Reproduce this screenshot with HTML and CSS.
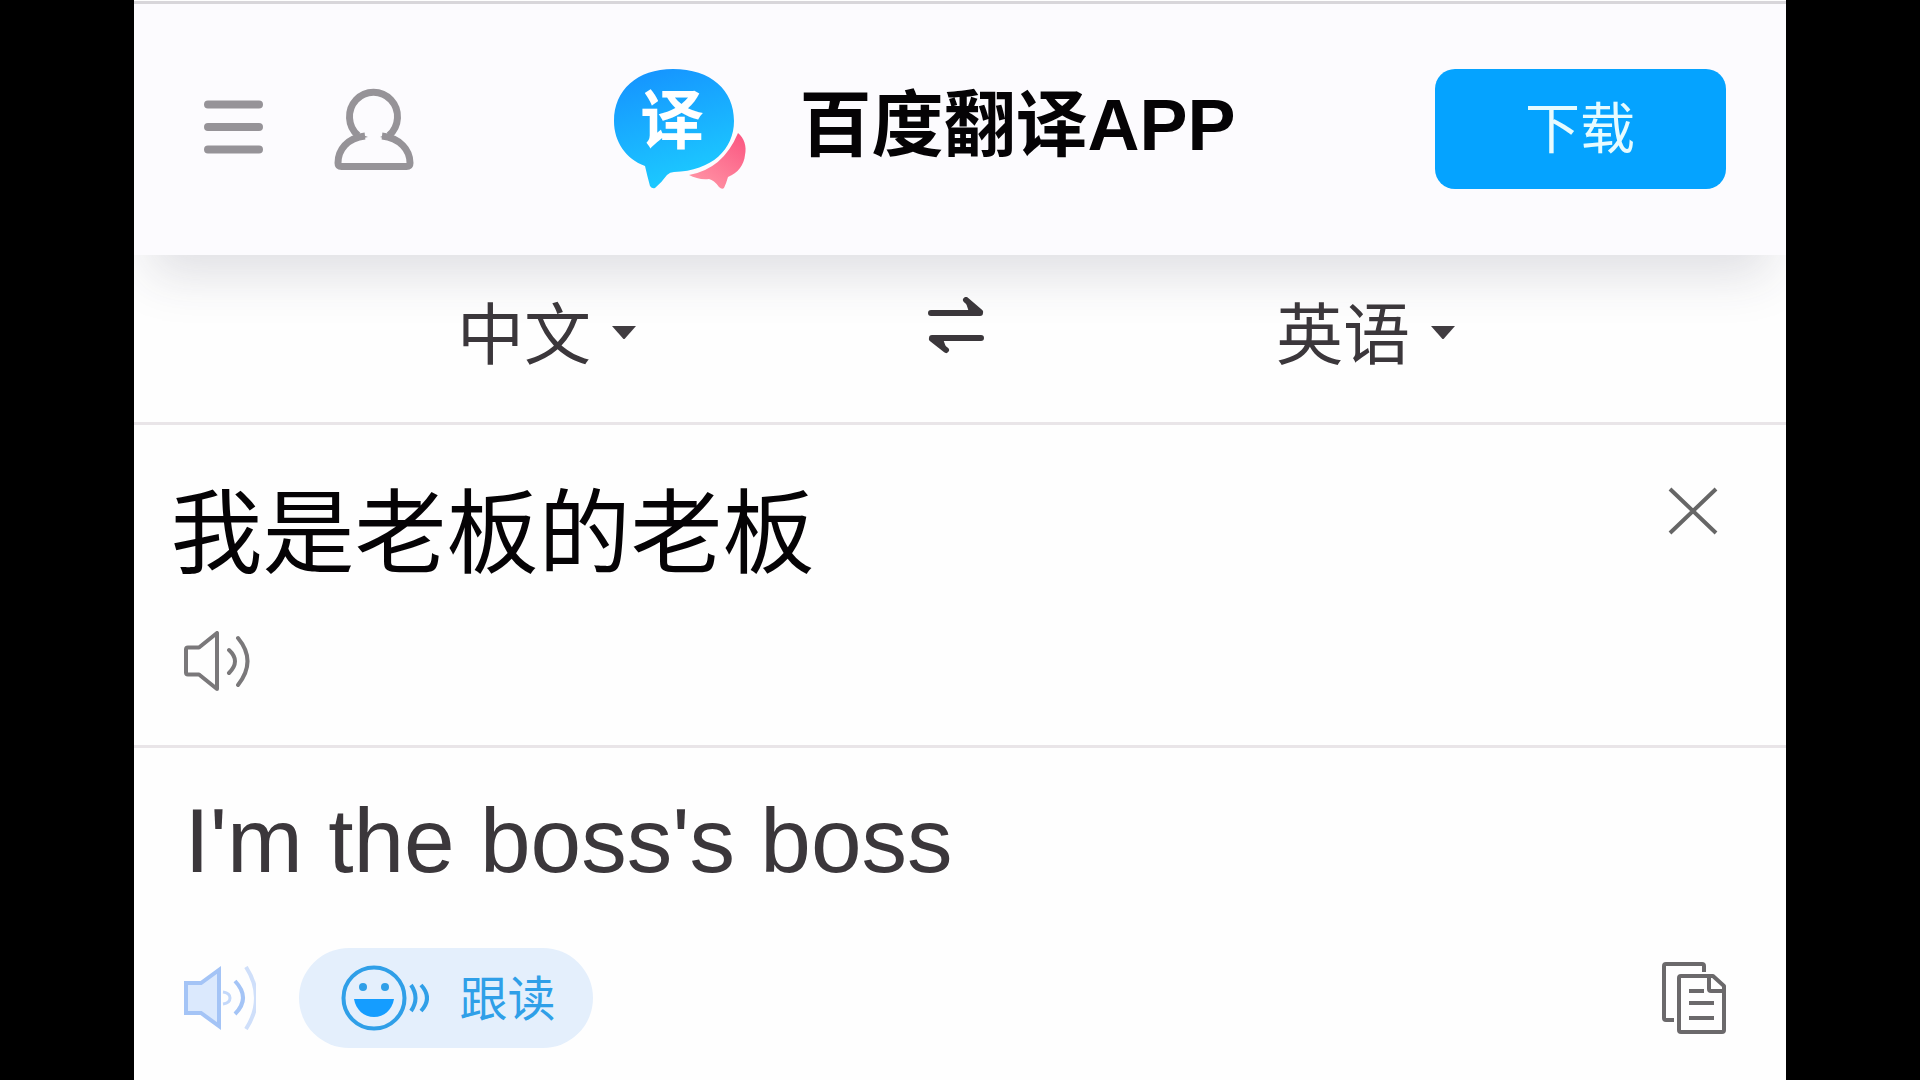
FILE: index.html
```html
<!DOCTYPE html>
<html lang="zh-CN">
<head>
    <meta charset="UTF-8">
    <meta name="viewport" content="width=device-width, initial-scale=1.0">
    <title>百度翻译</title>
    <link rel="stylesheet" href="styles.css">
</head>
<body>
    <div class="app">
        <header class="header">
            <div class="header-nav">
                <button class="icon-btn" type="button" aria-label="菜单">
                    <svg width="60" height="58" viewBox="0 0 60 58" fill="none" stroke="#969398" stroke-width="8" stroke-linecap="round">
                        <path d="M4 4.500H55M4 27H55M4 49.500H55"/>
                    </svg>
                </button>
                <button class="icon-btn" type="button" aria-label="我的">
                    <svg width="80" height="82" viewBox="0 0 80 82" fill="none" stroke="#969398" stroke-width="7" stroke-linejoin="miter">
                        <path d="M24 47.500A24 24.500 0 1 1 55 47.500"/>
                        <path d="M31 48C13 50 4 62 4 75Q4 78.500 7.500 78.500H72.500Q76 78.500 76 75C76 62 66 50 48 48"/>
                        <path d="M21 44L34 49L25 51ZM58 44L46 49L54 51Z" fill="#969398" stroke="none"/>
                    </svg>
                </button>
            </div>
            <div class="brand">
                <svg width="134" height="122" viewBox="0 0 134 122">
                    <defs>
                        <linearGradient id="bubble" x1="0" y1="0" x2="0.3" y2="1">
                            <stop offset="0" stop-color="#1590ff"/>
                            <stop offset="1" stop-color="#1cc8ff"/>
                        </linearGradient>
                        <linearGradient id="bubble-back" x1="1" y1="0" x2="0.3" y2="1">
                            <stop offset="0" stop-color="#fb5480"/>
                            <stop offset="1" stop-color="#ff92a4"/>
                        </linearGradient>
                    </defs>
                    <path d="M125 65C131 70 134 78 132 87C131 97 125 105 115 109Q113 116 111 120Q109 122 106 119Q101 112 96 111C89 112 82 110 76 107Q110 101 125 65Z" fill="url(#bubble-back)"/>
                    <path d="M60 1C98 1 121 22 121 53C121 81 99 103 61 104Q57 104 54 107Q49 114 42 120Q39 121 37 118Q34 107 32 98C13 91 1 74 1 53C1 22 24 1 60 1Z" fill="url(#bubble)" stroke="#fcfbfe" stroke-width="4" paint-order="stroke"/>
                    <text class="logo-text" x="59" y="75" text-anchor="middle">译</text>
                </svg>
                <h1 class="brand-name">百度翻译APP</h1>
            </div>
            <button class="download" type="button">下载</button>
        </header>

        <div class="languages">
            <div class="language">
                <select class="language-select" aria-label="源语言">
                    <option selected>中文</option>
                    <option>英语</option>
                </select>
                <svg width="26" height="18" viewBox="0 0 26 18"><path d="M1 0H25L14 12.500Q13 13.500 12 12.500Z" fill="#403c40"/></svg>
            </div>
            <button class="icon-btn" type="button" aria-label="交换语言">
                <svg width="56" height="76" viewBox="0 0 56 76" fill="none" stroke="#3b373b" stroke-width="6" stroke-linecap="round" stroke-linejoin="round">
                    <path d="M3 16H52M52 15L38 3M53 41H4M4 42L18 53"/>
                    <path d="M38 3L52 15H42ZM18 53L4 42H14Z" fill="#3b373b" stroke-width="2"/>
                </svg>
            </button>
            <div class="language">
                <select class="language-select" aria-label="目标语言">
                    <option>中文</option>
                    <option selected>英语</option>
                </select>
                <svg width="26" height="18" viewBox="0 0 26 18"><path d="M1 0H25L14 12.500Q13 13.500 12 12.500Z" fill="#403c40"/></svg>
            </div>
        </div>

        <section class="source">
            <div class="source-row">
                <textarea class="source-text" rows="1" aria-label="输入文本">我是老板的老板</textarea>
                <button class="icon-btn clear" type="button" aria-label="清空">
                    <svg width="50" height="48" viewBox="0 0 50 48" fill="none" stroke="#666" stroke-width="4">
                        <path d="M2 2L48 46M48 2L2 46"/>
                    </svg>
                </button>
            </div>
            <div class="source-actions">
                <button class="icon-btn" type="button" aria-label="朗读原文">
                    <svg width="66" height="60" viewBox="0 0 66 60" fill="none" stroke="#7a787a" stroke-width="4" stroke-linecap="round" stroke-linejoin="round">
                        <path d="M4 16.500H15L33 2V58L15 43.500H4Q2 43.500 2 41.500V18.500Q2 16.500 4 16.500Z"/>
                        <path d="M45 19Q57 30 45 42M54 7Q73 30 54 54"/>
                    </svg>
                </button>
            </div>
        </section>

        <section class="result">
            <p class="result-text" lang="en">I'm the boss's boss</p>
            <div class="result-actions">
                <button class="icon-btn" type="button" aria-label="朗读译文">
                    <svg width="72" height="64" viewBox="0 0 72 64" fill="none" stroke="#a4c4f6" stroke-width="4">
                        <path d="M2 17H17L35 4V60L17 47H2Z" fill="#dbe9fd"/>
                        <path d="M39 26Q46 27 46 32Q46 37 39 38" stroke="#c3d8fa" stroke-width="3"/>
                        <path d="M51 15Q67 32 51 48"/>
                        <path d="M62 1Q82 32 62 63" stroke="#cfdffa" stroke-width="4"/>
                    </svg>
                </button>
                <button class="follow" type="button">
                    <svg width="88" height="66" viewBox="0 0 88 66" fill="none" stroke="#2f9fe8" stroke-width="4">
                        <circle cx="33" cy="33" r="30.500"/>
                        <circle cx="22" cy="22" r="4" fill="#2f9fe8" stroke="none"/>
                        <circle cx="44" cy="22" r="4" fill="#2f9fe8" stroke="none"/>
                        <path d="M13 34H53C51 45 43 52 33 52S15 45 13 34Z" fill="#159dff" stroke="none"/>
                        <path d="M70 20Q79 33 70 46M80 20Q92 33 80 46"/>
                    </svg>
                    <span class="follow-label">跟读</span>
                </button>
                <button class="icon-btn copy" type="button" aria-label="复制">
                    <svg width="64" height="72" viewBox="0 0 64 72" fill="none" stroke="#6b696b" stroke-width="4" stroke-linejoin="round">
                        <path d="M42 10V4Q42 2 40 2H4Q2 2 2 4V56Q2 58 4 58H12"/>
                        <path d="M19 14H51L62 24V68Q62 70 60 70H19Q17 70 17 68V16Q17 14 19 14Z"/>
                        <path d="M47 14V27Q47 29 49 29H62M27 29H42M27 41H52M27 56H52"/>
                    </svg>
                </button>
            </div>
        </section>
    </div>
</body>
</html>
```
FILE: styles.css
```css
* {
    box-sizing: border-box;
}
body {
    margin: 0;
    background: #000;
    color: #3b373b;
    font-family: "Liberation Sans", "Noto Sans CJK SC", sans-serif;
}
button, select, textarea {
    margin: 0;
    padding: 0;
    border: none;
    background: none;
    color: inherit;
    font-family: inherit;
}
button {
    cursor: pointer;
}
svg {
    display: block;
    flex: none;
}
.app {
    width: 86%;
    min-height: 100vh;
    margin: 0 auto;
    padding-top: 1px;
    background: #fefefe;
    overflow: hidden;
}
.icon-btn {
    flex: none;
}

/* header */
.header {
    display: flex;
    align-items: center;
    justify-content: space-between;
    padding: 64px 60px 65px 70px;
    border-top: 3px solid #d8d6da;
    background: #fcfbfe;
    box-shadow: 0 36px 48px -16px rgba(50, 50, 75, 0.15);
}
.header-nav {
    display: flex;
    align-items: center;
    gap: 70px;
}
.brand {
    display: flex;
    align-items: center;
    gap: 52px;
}
.logo-text {
    fill: #fff;
    font-family: "Noto Sans CJK SC", sans-serif;
    font-size: 64px;
    font-weight: bold;
}
.brand-name {
    margin: 0;
    padding-bottom: 8px;
    color: #050305;
    font-size: 72px;
    line-height: 110px;
    white-space: nowrap;
}
.download {
    width: 291px;
    height: 120px;
    padding-bottom: 10px;
    border-radius: 20px;
    background: #05a3ff;
    color: #e6fbff;
    font-size: 55px;
}

/* language bar */
.languages {
    display: grid;
    grid-template-columns: 1fr 1fr 1fr;
    place-items: center;
    padding: 30px 215px 37px 208px;
    border-bottom: 3px solid #e9e5e8;
}
.language {
    display: flex;
    align-items: center;
    gap: 20px;
}
.language-select {
    appearance: none;
    height: 100px;
    font-size: 67px;
    outline: none;
}

/* source text */
.source {
    padding: 54px 68px 54px 36px;
    border-bottom: 3px solid #e9e5e8;
}
.source-row {
    display: flex;
    align-items: flex-start;
}
.source-text {
    flex: 1;
    min-width: 0;
    height: 110px;
    color: #050305;
    font-size: 92px;
    line-height: 110px;
    resize: none;
    outline: none;
    overflow: hidden;
}
.clear {
    padding-top: 8px;
}
.source-actions {
    display: flex;
    padding: 42px 0 0 14px;
}

/* translation */
.result {
    padding: 38px 60px 32px 50px;
}
.result-text {
    margin: 0 0 52px;
    font-size: 91px;
    line-height: 110px;
}
.result-actions {
    display: flex;
    align-items: center;
}
.follow {
    display: flex;
    align-items: center;
    gap: 30px;
    height: 100px;
    margin-left: 43px;
    padding: 0 38px 0 42px;
    border-radius: 50px;
    background: #e4effc;
    color: #2f9fe8;
    font-size: 48px;
}
.follow-label {
    padding-bottom: 6px;
}
.copy {
    margin-left: auto;
}
```
